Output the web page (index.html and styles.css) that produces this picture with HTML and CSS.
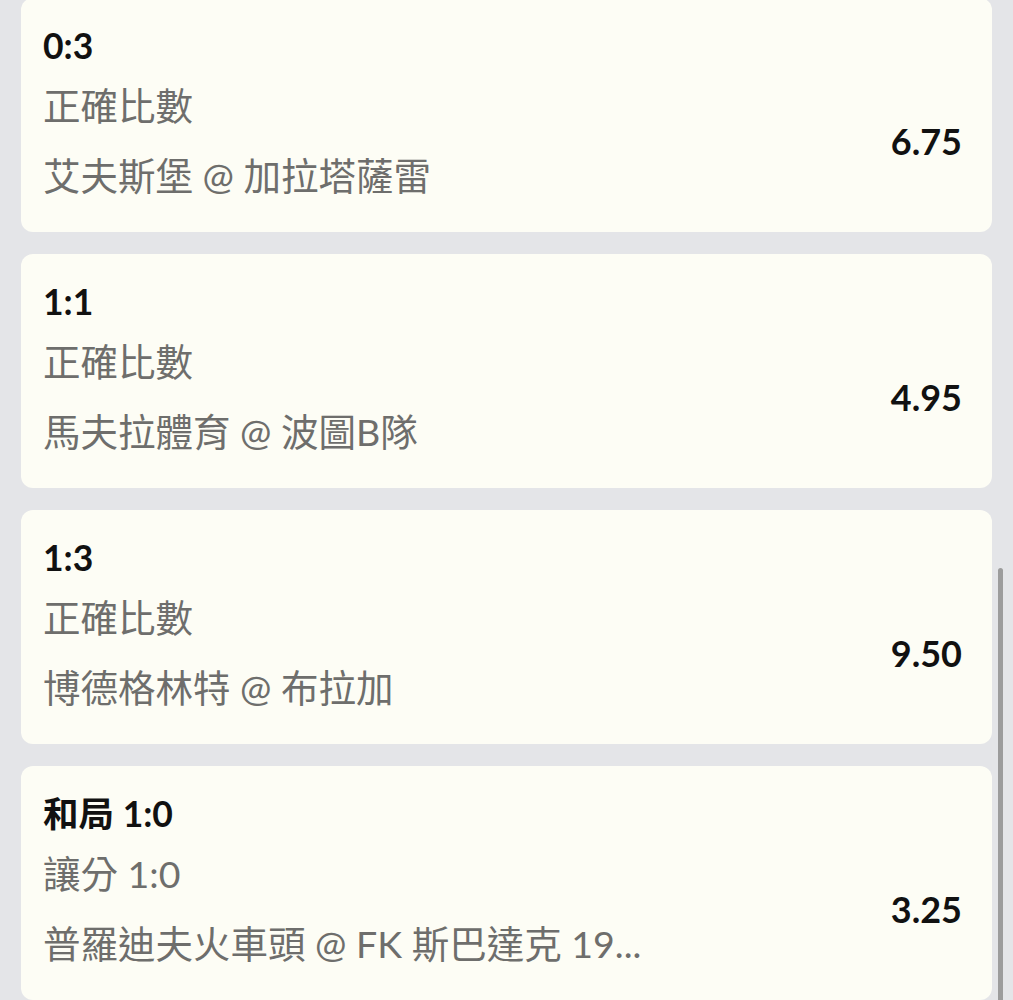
FILE: index.html
```html
<!DOCTYPE html>
<html lang="zh-Hant">
<head>
<meta charset="utf-8">
<title>投注選項</title>
<link rel="stylesheet" href="styles.css">
</head>
<body>
<main class="list">
  <section class="card">
    <div class="title">0:3</div>
    <div class="row">
      <div class="info">
        <div class="line">正確比數</div>
        <div class="line">艾夫斯堡 @ 加拉塔薩雷</div>
      </div>
      <div class="odds">6.75</div>
    </div>
  </section>
  <section class="card">
    <div class="title">1:1</div>
    <div class="row">
      <div class="info">
        <div class="line">正確比數</div>
        <div class="line">馬夫拉體育 @ 波圖B隊</div>
      </div>
      <div class="odds">4.95</div>
    </div>
  </section>
  <section class="card">
    <div class="title">1:3</div>
    <div class="row">
      <div class="info">
        <div class="line">正確比數</div>
        <div class="line">博德格林特 @ 布拉加</div>
      </div>
      <div class="odds">9.50</div>
    </div>
  </section>
  <section class="card">
    <div class="title">和局 1:0</div>
    <div class="row">
      <div class="info">
        <div class="line">讓分 1:0</div>
        <div class="line">普羅迪夫火車頭 @ FK 斯巴達克 19...</div>
      </div>
      <div class="odds">3.25</div>
    </div>
  </section>
</main>
<div class="scrollbar"></div>
</body>
</html>
```

FILE: styles.css
```css
html, body {
  margin: 0;
  padding: 0;
  background: #e4e5e8;
  height: 1000px;
  overflow: hidden;
}

body {
  font-family: Lato, "Noto Sans CJK TC", sans-serif;
}

.list {
  display: flex;
  flex-direction: column;
  gap: 22px;
  padding: 0 21px;
  margin-top: -2px;
}

.card {
  background: #fdfdf5;
  border-radius: 12px;
  height: 234px;
  box-sizing: border-box;
  padding: 28px 30px 0 22px;
}

.title {
  font-size: 35.5px;
  font-weight: 700;
  line-height: 40px;
  color: #111;
}

.row {
  display: flex;
  align-items: center;
  justify-content: space-between;
  margin-top: 15px;
}

.info {
  display: flex;
  flex-direction: column;
  gap: 20px;
}

.line {
  font-size: 37.5px;
  line-height: 50px;
  color: #6e6e6c;
  white-space: nowrap;
}

.odds {
  font-size: 36px;
  font-weight: 700;
  color: #111;
}

.scrollbar {
  position: absolute;
  left: 998px;
  top: 568px;
  width: 5px;
  height: 440px;
  border-radius: 3px;
  background: #9c9c9c;
}
```
